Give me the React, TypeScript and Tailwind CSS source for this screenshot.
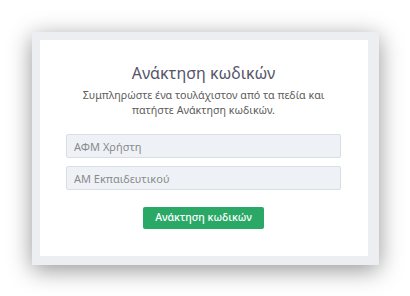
export default function App() {
  return (
    <div className="flex min-h-screen justify-center bg-white pt-8 font-['Noto_Sans',sans-serif]">
      <div className="h-[233px] w-[347px] bg-[#eceef2] pb-[9px] pl-2 pr-[11px] pt-2 shadow-[0_5px_22px_rgba(0,0,0,0.42)]">
        <div className="flex h-full flex-col items-center bg-white pt-[23px]">
          <h1 className="text-[16px] font-normal leading-[21px] text-[#55556a]">Ανάκτηση κωδικών</h1>
          <p className="mt-[4px] text-center text-[10.7px] leading-[15px] text-[#5c5c5c]">
            Συμπληρώστε ένα τουλάχιστον από τα πεδία και
            <br />
            πατήστε Ανάκτηση κωδικών.
          </p>
          <div className="mt-[16px] flex w-[275px] flex-col gap-2">
            <input
              className="h-6 w-full rounded-[2px] border border-[#d9dee6] bg-[#eef2f7] px-[7px] text-[11px] text-[#555] outline-none placeholder:text-[#8a8a8a]"
              placeholder="ΑΦΜ Χρήστη"
            />
            <input
              className="h-6 w-full rounded-[2px] border border-[#d9dee6] bg-[#eef2f7] px-[7px] text-[11px] text-[#555] outline-none placeholder:text-[#8a8a8a]"
              placeholder="ΑΜ Εκπαιδευτικού"
            />
          </div>
          <button className="mt-[17px] h-[22px] w-[121px] rounded-[2px] bg-[#2aa866] text-[10.5px] font-medium text-white">
            Ανάκτηση κωδικών
          </button>
        </div>
      </div>
    </div>
  )
}
